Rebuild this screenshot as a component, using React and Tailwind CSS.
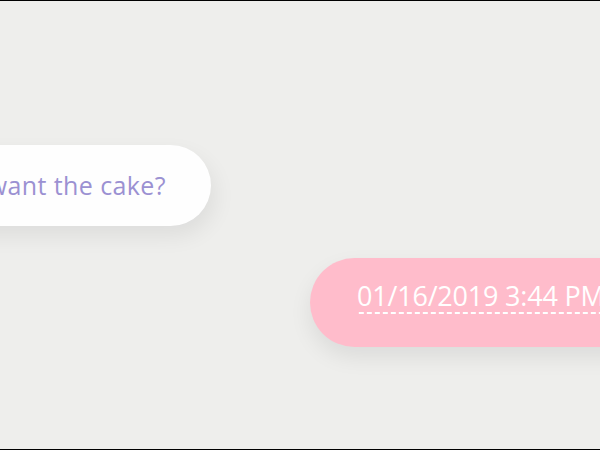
export default function App() {
  return (
    <div
      className="w-[600px] h-[450px] bg-[#eeeeec] border-y border-black overflow-hidden flex flex-col"
      style={{ fontFamily: '"Open Sans", "Noto Sans", sans-serif' }}
    >
      <div className="mt-[144px] w-[211px] flex justify-end overflow-visible">
        <div className="shrink-0 h-[81px] rounded-r-full bg-[#fefefe] flex items-center pr-[45px] pl-[40px] whitespace-nowrap text-[25px] tracking-[0.4px] text-[#9b91d2] shadow-[4px_10px_22px_rgba(0,0,0,0.07)] -ml-[120px]">
          Do you want the cake?
        </div>
      </div>
      <div className="mt-[32px] ml-[310px] h-[89px] w-[340px] shrink-0 rounded-l-full bg-[#ffbccb] flex items-start pt-[23px] pl-[47px] whitespace-nowrap shadow-[0_10px_22px_rgba(0,0,0,0.08)]">
        <span className="text-[27px] leading-[30px] tracking-[-0.2px] text-white pb-[3px] bg-[linear-gradient(to_right,#ffffff_62%,transparent_0%)] bg-[length:8px_2px] bg-repeat-x bg-bottom pr-[20px]">
          01/16/2019 3:44 PM
        </span>
      </div>
    </div>
  );
}
